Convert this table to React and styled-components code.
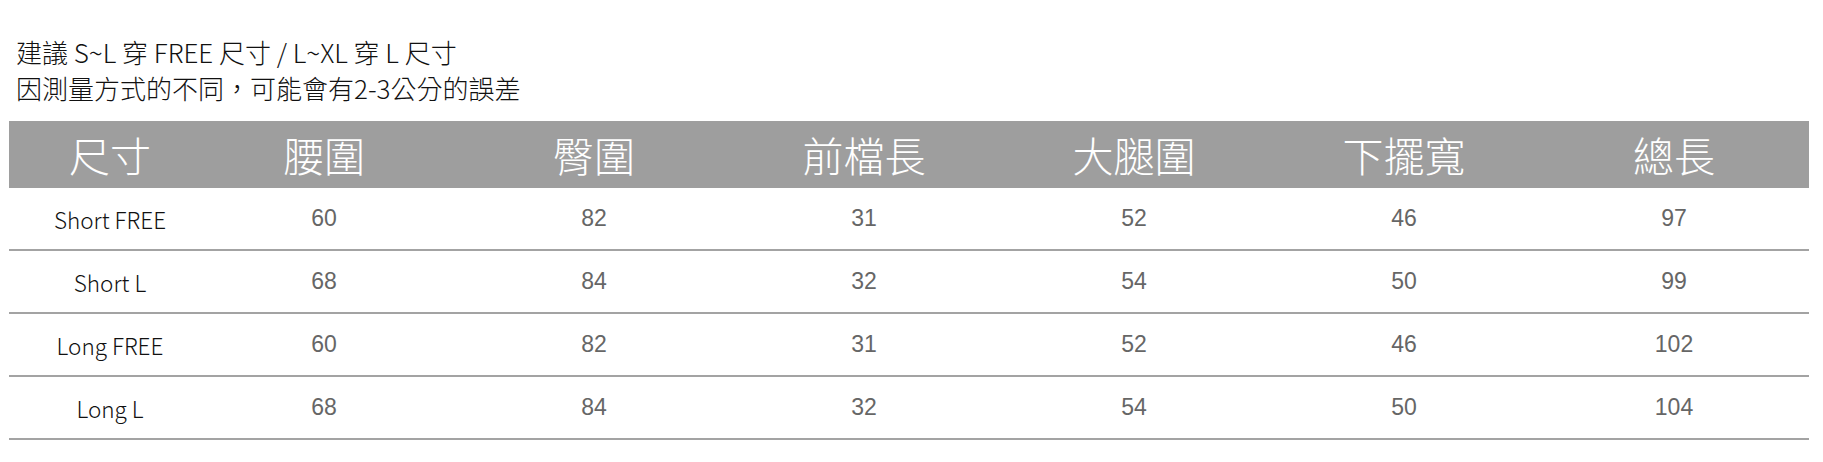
import React from "react";
import styled, { createGlobalStyle } from "styled-components";

const GlobalStyle = createGlobalStyle`
  body {
    margin: 0;
    background: #fff;
    font-family: "Noto Sans CJK TC", "Noto Sans", sans-serif;
  }
`;

const Page = styled.div`
  padding: 34px 14px 0 9px;
  width: 1800px;
`;

const Note = styled.div`
  padding-left: 7px;
  font-size: 26px;
  font-weight: 300;
  line-height: 36px;
  color: #111;
`;

const SizeTable = styled.table`
  width: 1800px;
  margin-top: 15px;
  border-collapse: collapse;
  table-layout: fixed;
`;

const HeadCell = styled.th`
  box-sizing: border-box;
  width: ${(props) => (props.first ? "180px" : "270px")};
  height: 67px;
  padding: 0 0 0 ${(props) => (props.first ? "22px" : "0")};
  background: #9e9e9e;
  color: #fff;
  font-weight: 300;
  font-size: 41px;
  line-height: 1;
  text-align: center;
  font-family: "Noto Sans CJK TC", sans-serif;
`;

const Row = styled.tr`
  border-bottom: 2px solid #a3a3a3;
`;

const SizeCell = styled.td`
  box-sizing: border-box;
  height: 61px;
  padding: 0 0 0 22px;
  text-align: center;
  font-size: 22.5px;
  font-weight: 300;
  color: #111;
  font-family: "Noto Sans CJK TC", sans-serif;
`;

const ValueCell = styled.td`
  height: 61px;
  padding: 0;
  text-align: center;
  font-size: 23px;
  color: #666;
  font-family: "Liberation Sans", Arial, sans-serif;
`;

const headers = ["尺寸", "腰圍", "臀圍", "前檔長", "大腿圍", "下擺寬", "總長"];

const rows = [
  ["Short FREE", 60, 82, 31, 52, 46, 97],
  ["Short L", 68, 84, 32, 54, 50, 99],
  ["Long FREE", 60, 82, 31, 52, 46, 102],
  ["Long L", 68, 84, 32, 54, 50, 104],
];

export default function App() {
  return (
    <>
      <GlobalStyle />
      <Page>
        <Note>建議 S~L 穿 FREE 尺寸 / L~XL 穿 L 尺寸</Note>
        <Note>因測量方式的不同，可能會有2-3公分的誤差</Note>
        <SizeTable>
          <thead>
            <tr>
              {headers.map((h, i) => (
                <HeadCell key={h} first={i === 0}>
                  {h}
                </HeadCell>
              ))}
            </tr>
          </thead>
          <tbody>
            {rows.map((r) => (
              <Row key={r[0]}>
                <SizeCell>{r[0]}</SizeCell>
                {r.slice(1).map((v, i) => (
                  <ValueCell key={i}>{v}</ValueCell>
                ))}
              </Row>
            ))}
          </tbody>
        </SizeTable>
      </Page>
    </>
  );
}
